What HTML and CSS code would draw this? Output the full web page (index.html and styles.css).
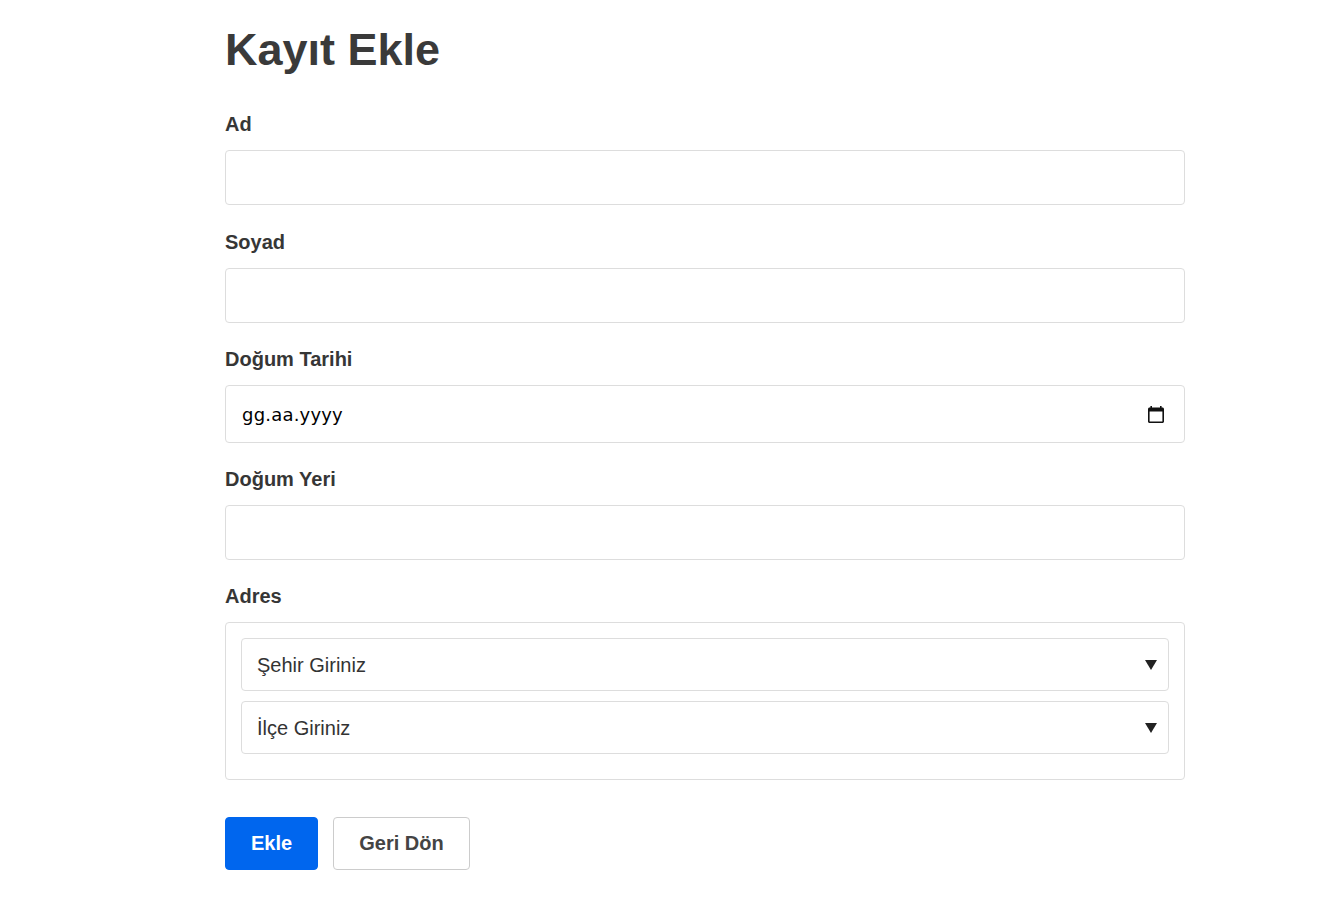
FILE: index.html
```html
<!DOCTYPE html>
<html lang="tr">
<head>
<meta charset="utf-8">
<title>Kayıt Ekle</title>
<link rel="stylesheet" href="styles.css">
</head>
<body>
<main class="page">
  <h1 class="title">Kayıt Ekle</h1>
  <form class="form">
    <div class="group">
      <label class="label" for="ad">Ad</label>
      <input class="input" id="ad" type="text">
    </div>
    <div class="group">
      <label class="label" for="soyad">Soyad</label>
      <input class="input" id="soyad" type="text">
    </div>
    <div class="group">
      <label class="label" for="dt">Doğum Tarihi</label>
      <div class="date-field">
        <input class="date-text" id="dt" type="text" placeholder="gg.aa.yyyy">
        <svg class="cal-icon" width="16" height="17" viewBox="2 1 20 22" preserveAspectRatio="none" aria-hidden="true"><path d="M20 3h-1V1h-2v2H7V1H5v2H4c-1.1 0-2 .9-2 2v16c0 1.1.9 2 2 2h16c1.1 0 2-.9 2-2V5c0-1.1-.9-2-2-2zm0 18H4V8h16v13z" fill="#111"/></svg>
      </div>
    </div>
    <div class="group">
      <label class="label" for="yer">Doğum Yeri</label>
      <input class="input" id="yer" type="text">
    </div>
    <div class="group">
      <span class="label">Adres</span>
      <fieldset class="address">
        <select class="select"><option>Şehir Giriniz</option></select>
        <select class="select"><option>İlçe Giriniz</option></select>
      </fieldset>
    </div>
    <div class="actions">
      <button type="button" class="btn btn-primary">Ekle</button>
      <button type="button" class="btn btn-secondary">Geri Dön</button>
    </div>
  </form>
</main>
</body>
</html>
```

FILE: styles.css
```css
* { box-sizing: border-box; }

html, body {
  margin: 0;
  background: #fff;
}

body {
  font-family: "Liberation Sans", Arial, sans-serif;
  color: #333;
}

.page {
  width: 960px;
  margin-left: 225px;
  padding-top: 25px;
}

.title {
  margin: 0 0 37px;
  font-size: 45px;
  line-height: 50px;
  font-weight: 700;
  color: #3a3a3a;
}

.form {
  display: flex;
  flex-direction: column;
}

.group {
  display: flex;
  flex-direction: column;
  margin-bottom: 24px;
}

.group:first-child {
  margin-bottom: 25px;
}

.label {
  display: block;
  font-size: 20px;
  line-height: 24px;
  font-weight: 700;
  color: #363636;
  margin-bottom: 14px;
}

.input {
  display: block;
  width: 100%;
  height: 55px;
  padding: 0 15px;
  border: 1px solid #ddd;
  border-radius: 4px;
  font-family: "Liberation Sans", Arial, sans-serif;
  font-size: 20px;
  color: #333;
  background: #fff;
  outline: none;
}

.date-field {
  display: flex;
  align-items: center;
  justify-content: space-between;
  height: 58px;
  padding: 0 20px 0 16px;
  border: 1px solid #ddd;
  border-radius: 4px;
  background: #fff;
}

.date-text {
  flex: 1;
  border: none;
  outline: none;
  padding: 0;
  font-family: "DejaVu Sans", sans-serif;
  font-size: 18px;
  letter-spacing: 0.2px;
  color: #000;
  background: transparent;
}

.date-text::placeholder {
  color: #000;
  opacity: 1;
}

.cal-icon {
  display: block;
  flex: none;
}

.address {
  margin: 0 0 13px;
  padding: 15px;
  border: 1px solid #ddd;
  border-radius: 4px;
  display: flex;
  flex-direction: column;
  gap: 10px;
  min-width: 0;
  height: 158px;
}

.select {
  -webkit-appearance: none;
  appearance: none;
  display: block;
  width: 100%;
  height: 53px;
  padding: 0 40px 0 15px;
  border: 1px solid #ddd;
  border-radius: 4px;
  font-family: "Liberation Sans", Arial, sans-serif;
  font-size: 20px;
  color: #333;
  background: #fff url("data:image/svg+xml;utf8,<svg xmlns='http://www.w3.org/2000/svg' width='12' height='10' viewBox='0 0 12 10'><polygon points='0,0 12,0 6,10' fill='%23222'/></svg>") no-repeat right 11px center;
  outline: none;
}

.actions {
  display: flex;
  gap: 15px;
}

.btn {
  height: 53px;
  padding: 0;
  border-radius: 4px;
  font-family: "Liberation Sans", Arial, sans-serif;
  font-size: 20px;
  font-weight: 700;
  cursor: pointer;
}

.btn-primary {
  width: 93px;
  background: #0066ee;
  color: #fff;
  border: 1px solid #0066ee;
}

.btn-secondary {
  width: 137px;
  background: #fff;
  color: #444;
  border: 1px solid #ccc;
}
```
